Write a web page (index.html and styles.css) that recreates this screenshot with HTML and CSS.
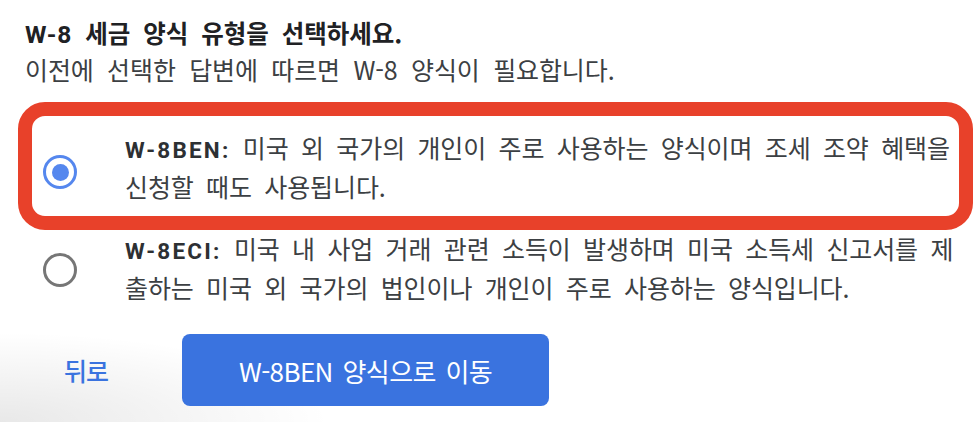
FILE: index.html
```html
<!DOCTYPE html>
<html lang="ko">
<head>
<meta charset="utf-8">
<title>W-8 양식 선택</title>
<link rel="stylesheet" href="styles.css">
</head>
<body>
<main class="page">
  <h1 class="title"><span class="latin">W-8</span> 세금 양식 유형을 선택하세요.</h1>
  <p class="subtitle">이전에 선택한 답변에 따르면 W-8 양식이 필요합니다.</p>

  <div class="options" role="radiogroup">
    <label class="option option-selected">
      <span class="radio radio-on"><span class="radio-dot"></span></span>
      <span class="option-text"><b class="form-name">W-8BEN:</b> 미국 외 국가의 개인이 주로 사용하는 양식이며 조세 조약 혜택을 신청할 때도 사용됩니다.</span>
    </label>
    <label class="option">
      <span class="radio"></span>
      <span class="option-text"><b class="form-name">W-8ECI:</b> 미국 내 사업 거래 관련 소득이 발생하며 미국 소득세 신고서를 제출하는 미국 외 국가의 법인이나 개인이 주로 사용하는 양식입니다.</span>
    </label>
  </div>

  <div class="actions">
    <button class="btn-text" type="button">뒤로</button>
    <button class="btn-primary" type="button">W-8BEN 양식으로 이동</button>
  </div>
</main>
</body>
</html>
```

FILE: styles.css
```css
html, body {
  margin: 0;
  height: 100%;
}

body {
  font-family: "Noto Sans CJK KR", "Noto Sans", sans-serif;
  color: #3c4043;
  background:
    radial-gradient(ellipse 330px 90px at 0 100%, rgba(0, 0, 0, 0.09), rgba(0, 0, 0, 0) 100%),
    #ffffff;
}

.page {
  padding: 16px 3px 0 18px;
}

.title {
  margin: 0 0 0 7px;
  font-size: 24.5px;
  line-height: 34px;
  font-weight: 700;
  letter-spacing: 0;
  word-spacing: 6px;
  color: #202124;
}

.latin {
  font-family: Roboto, sans-serif;
  letter-spacing: 1px;
}

.subtitle {
  margin: -1px 0 0 7px;
  font-size: 25px;
  line-height: 36px;
  font-weight: 400;
  letter-spacing: -0.1px;
  word-spacing: 6.5px;
  color: #3c4043;
}

.options {
  margin-top: 15px;
  display: flex;
  flex-direction: column;
}

.option {
  display: flex;
  align-items: flex-start;
  gap: 48px;
  padding: 0 15px 0 25px;
  cursor: pointer;
}

.option-selected {
  border: 14px solid #e8412a;
  border-radius: 27px;
  padding: 13px 1px 12px 11px;
}

.option-text {
  flex: 1;
  font-size: 25px;
  line-height: 36px;
  letter-spacing: -0.1px;
  word-spacing: 5.5px;
  color: #3c4043;
}

.form-name {
  font-family: Roboto, "Noto Sans CJK KR", sans-serif;
  font-size: 22.5px;
  font-weight: 700;
  letter-spacing: 2.2px;
  word-spacing: 0;
  color: #2d3033;
}

.radio {
  flex: none;
  box-sizing: border-box;
  width: 34px;
  height: 34px;
  margin-top: 23px;
  border: 3px solid #767676;
  border-radius: 50%;
  display: flex;
  align-items: center;
  justify-content: center;
}

.radio-on {
  margin-top: 26px;
  border-color: #5587ee;
}

.radio-dot {
  width: 17px;
  height: 17px;
  border-radius: 50%;
  background: #5587ee;
}

.actions {
  margin-top: 29px;
  display: flex;
  align-items: center;
  gap: 50px;
}

.btn-text {
  margin-left: 22px;
  padding: 0 24px;
  border: 0;
  background: none;
  font-family: "Noto Sans CJK KR", sans-serif;
  font-size: 25px;
  font-weight: 500;
  letter-spacing: -1px;
  color: #3a73df;
  cursor: pointer;
}

.btn-primary {
  width: 367px;
  height: 72px;
  border: 0;
  border-radius: 8px;
  background: #3a73df;
  color: #ffffff;
  font-family: "Noto Sans CJK KR", sans-serif;
  font-size: 26px;
  font-weight: 400;
  letter-spacing: -0.6px;
  word-spacing: 3px;
  cursor: pointer;
}
```
